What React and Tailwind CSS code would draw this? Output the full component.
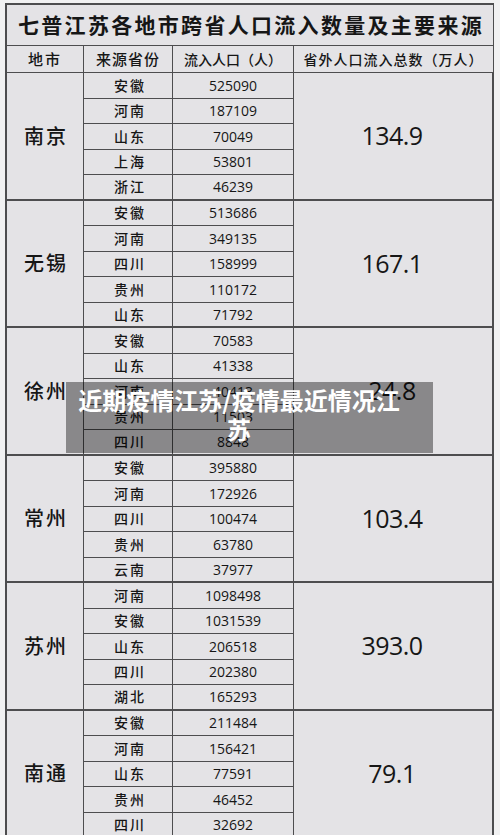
import React from "react";

const groups = [
  {
    city: "南京",
    total: "134.9",
    rows: [
      ["安徽", "525090"],
      ["河南", "187109"],
      ["山东", "70049"],
      ["上海", "53801"],
      ["浙江", "46239"],
    ],
  },
  {
    city: "无锡",
    total: "167.1",
    rows: [
      ["安徽", "513686"],
      ["河南", "349135"],
      ["四川", "158999"],
      ["贵州", "110172"],
      ["山东", "71792"],
    ],
  },
  {
    city: "徐州",
    total: "24.8",
    rows: [
      ["安徽", "70583"],
      ["山东", "41338"],
      ["河南", "40413"],
      ["贵州", "11503"],
      ["四川", "8848"],
    ],
  },
  {
    city: "常州",
    total: "103.4",
    rows: [
      ["安徽", "395880"],
      ["河南", "172926"],
      ["四川", "100474"],
      ["贵州", "63780"],
      ["云南", "37977"],
    ],
  },
  {
    city: "苏州",
    total: "393.0",
    rows: [
      ["河南", "1098498"],
      ["安徽", "1031539"],
      ["山东", "206518"],
      ["四川", "202380"],
      ["湖北", "165293"],
    ],
  },
  {
    city: "南通",
    total: "79.1",
    rows: [
      ["安徽", "211484"],
      ["河南", "156421"],
      ["山东", "77591"],
      ["贵州", "46452"],
      ["四川", "32692"],
    ],
  },
];

const cjk = "font-['Noto_Sans_CJK_SC',sans-serif]";
const num = "font-['Open_Sans','Noto_Sans_CJK_SC',sans-serif]";
const cell = "border-r border-b border-[#4d4d4f] flex items-center justify-center";

const App = () => {
  return (
    <div className="relative w-[500px] h-[835px] overflow-hidden bg-[#f1f1f2] text-[#161616]">
      <div className="pt-[3px] pl-[5px]">
        {/* table */}
        <div className="w-[489px] border-l-2 border-t-2 border-[#4d4d4f] bg-[#e4e3e6] grid grid-cols-[77px_89px_121px_200px] grid-rows-[41px_27px_repeat(30,25.5px)]">
          <div className={`${cell} col-span-4 ${cjk} font-bold text-[21px] tracking-[2.3px] whitespace-nowrap pl-[2px]`}>
            七普江苏各地市跨省人口流入数量及主要来源
          </div>

          <div className={`${cell} ${cjk} font-medium text-[15px] tracking-[2px]`}>地市</div>
          <div className={`${cell} ${cjk} font-medium text-[15px] tracking-[1px]`}>来源省份</div>
          <div className={`${cell} ${cjk} font-medium text-[14px]`}>流入人口（人）</div>
          <div className={`${cell} ${cjk} font-medium text-[14px] tracking-[1px]`}>省外人口流入总数（万人）</div>

          {groups.map((g) => (
            <React.Fragment key={g.city}>
              <div className={`${cell} row-span-5 ${cjk} font-medium text-[20px] tracking-[2px] border-b-2 pl-[2px]`}>
                {g.city}
              </div>
              {g.rows.map(([prov, n], i) => (
                <React.Fragment key={prov}>
                  <div
                    className={`${cell} col-start-2 ${cjk} font-medium text-[14px] tracking-[2px] pl-[4px] ${
                      i === 4 ? "border-b-2" : ""
                    }`}
                  >
                    {prov}
                  </div>
                  <div
                    className={`${cell} col-start-3 ${num} text-[14px] ${
                      i === 4 ? "border-b-2" : ""
                    }`}
                  >
                    {n}
                  </div>
                  {i === 0 && (
                    <div className={`${cell} col-start-4 row-span-5 ${num} text-[25px] border-r-2 border-b-2 tracking-[-0.5px] -ml-[2px]`}>
                      {g.total}
                    </div>
                  )}
                </React.Fragment>
              ))}
            </React.Fragment>
          ))}
        </div>
      </div>

      {/* caption overlay */}
      <div className="absolute left-[66px] top-[382px] w-[367px] h-[71px] bg-black/40 pl-[8px] pt-[3px]">
        <p className={`w-[330px] text-center text-white font-bold text-[24px] leading-[29px] ${cjk}`}>
          近期疫情江苏/疫情最近情况江苏
        </p>
      </div>
    </div>
  );
};

export default App;
